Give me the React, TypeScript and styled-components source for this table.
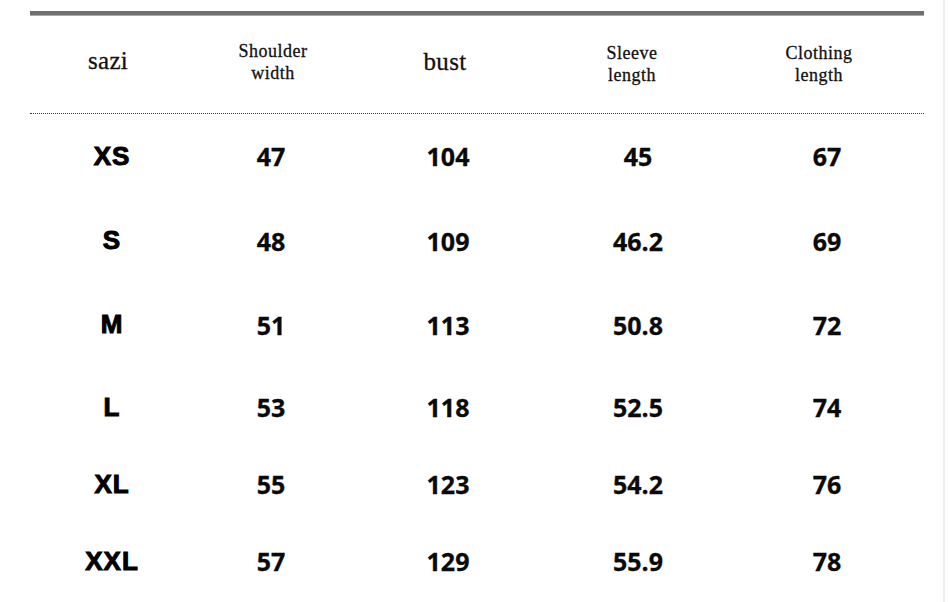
import React from "react";
import styled, { createGlobalStyle } from "styled-components";

const Global = createGlobalStyle`
  html, body { margin: 0; padding: 0; background: #ffffff; }
  body { width: 948px; height: 602px; overflow: hidden; }
`;

const Page = styled.div`
  width: 945px;
  height: 602px;
  box-sizing: border-box;
  border-right: 2px solid #ececec;
  padding: 11px 22px 0 30px;
  background: #fff;
`;

const Table = styled.div`
  width: 894px;
  border-top: 4px solid #6f6f6f;
  box-shadow: inset 0 1px 0 #a9a9a9;
`;

const Grid = styled.div`
  display: grid;
  grid-template-columns: 162px 158px 196px 184px 194px;
`;

const HeaderRow = styled(Grid)`
  height: 99px;
  border-bottom: 1px dotted #3a3a3a;
  box-sizing: border-box;
  padding-top: 1px;
`;

const HeadCell = styled.div<{ $shift: number; $big?: boolean; $dy?: number }>`
  display: flex;
  align-items: center;
  justify-content: center;
  text-align: center;
  font-family: "Liberation Serif", "Times New Roman", serif;
  color: #111;
  -webkit-text-stroke: 0.3px #111;
  font-size: ${(p) => (p.$big ? "25px" : "18px")};
  letter-spacing: ${(p) => (p.$big ? "0.3px" : "0.5px")};
  line-height: ${(p) => (p.$big ? "28px" : "22px")};
  transform: translate(${(p) => p.$shift}px, ${(p) => p.$dy ?? 0}px);
`;

const DataRow = styled(Grid)<{ $h: number }>`
  height: ${(p) => p.$h}px;
  align-items: center;
`;

const SizeCell = styled.div`
  text-align: center;
  font-family: "Liberation Sans", Arial, sans-serif;
  font-weight: 900;
  font-size: 26px;
  letter-spacing: 1px;
  -webkit-text-stroke: 1px #000;
  color: #000;
  transform: translateX(1px);
`;

const NumCell = styled.div`
  text-align: center;
  font-family: "Open Sans", "Noto Sans", sans-serif;
  font-weight: 700;
  font-size: 25px;
  -webkit-text-stroke: 0.3px #0a0a0a;
  color: #0a0a0a;
`;

const headers: { lines: string[]; shift: number; big?: boolean; dy?: number }[] = [
  { lines: ["sazi"], shift: -3, big: true, dy: -4 },
  { lines: ["Shoulder", "width"], shift: 2, dy: -3 },
  { lines: ["bust"], shift: -3, big: true, dy: -3 },
  { lines: ["Sleeve", "length"], shift: -6, dy: -1 },
  { lines: ["Clothing", "length"], shift: -8, dy: -1 },
];

const rows: { cells: string[]; h: number }[] = [
  { cells: ["XS", "47", "104", "45", "67"], h: 84 },
  { cells: ["S", "48", "109", "46.2", "69"], h: 85 },
  { cells: ["M", "51", "113", "50.8", "72"], h: 83 },
  { cells: ["L", "53", "118", "52.5", "74"], h: 82 },
  { cells: ["XL", "55", "123", "54.2", "76"], h: 72 },
  { cells: ["XXL", "57", "129", "55.9", "78"], h: 82 },
];

export default function App() {
  return (
    <>
      <Global />
      <Page>
        <Table>
          <HeaderRow>
            {headers.map((h, i) => (
              <HeadCell key={i} $shift={h.shift} $big={h.big} $dy={h.dy}>
                <div>
                  {h.lines.map((l, j) => (
                    <div key={j}>{l}</div>
                  ))}
                </div>
              </HeadCell>
            ))}
          </HeaderRow>
          {rows.map((r, i) => (
            <DataRow key={i} $h={r.h}>
              <SizeCell>{r.cells[0]}</SizeCell>
              {r.cells.slice(1).map((c, j) => (
                <NumCell key={j}>{c}</NumCell>
              ))}
            </DataRow>
          ))}
        </Table>
      </Page>
    </>
  );
}
